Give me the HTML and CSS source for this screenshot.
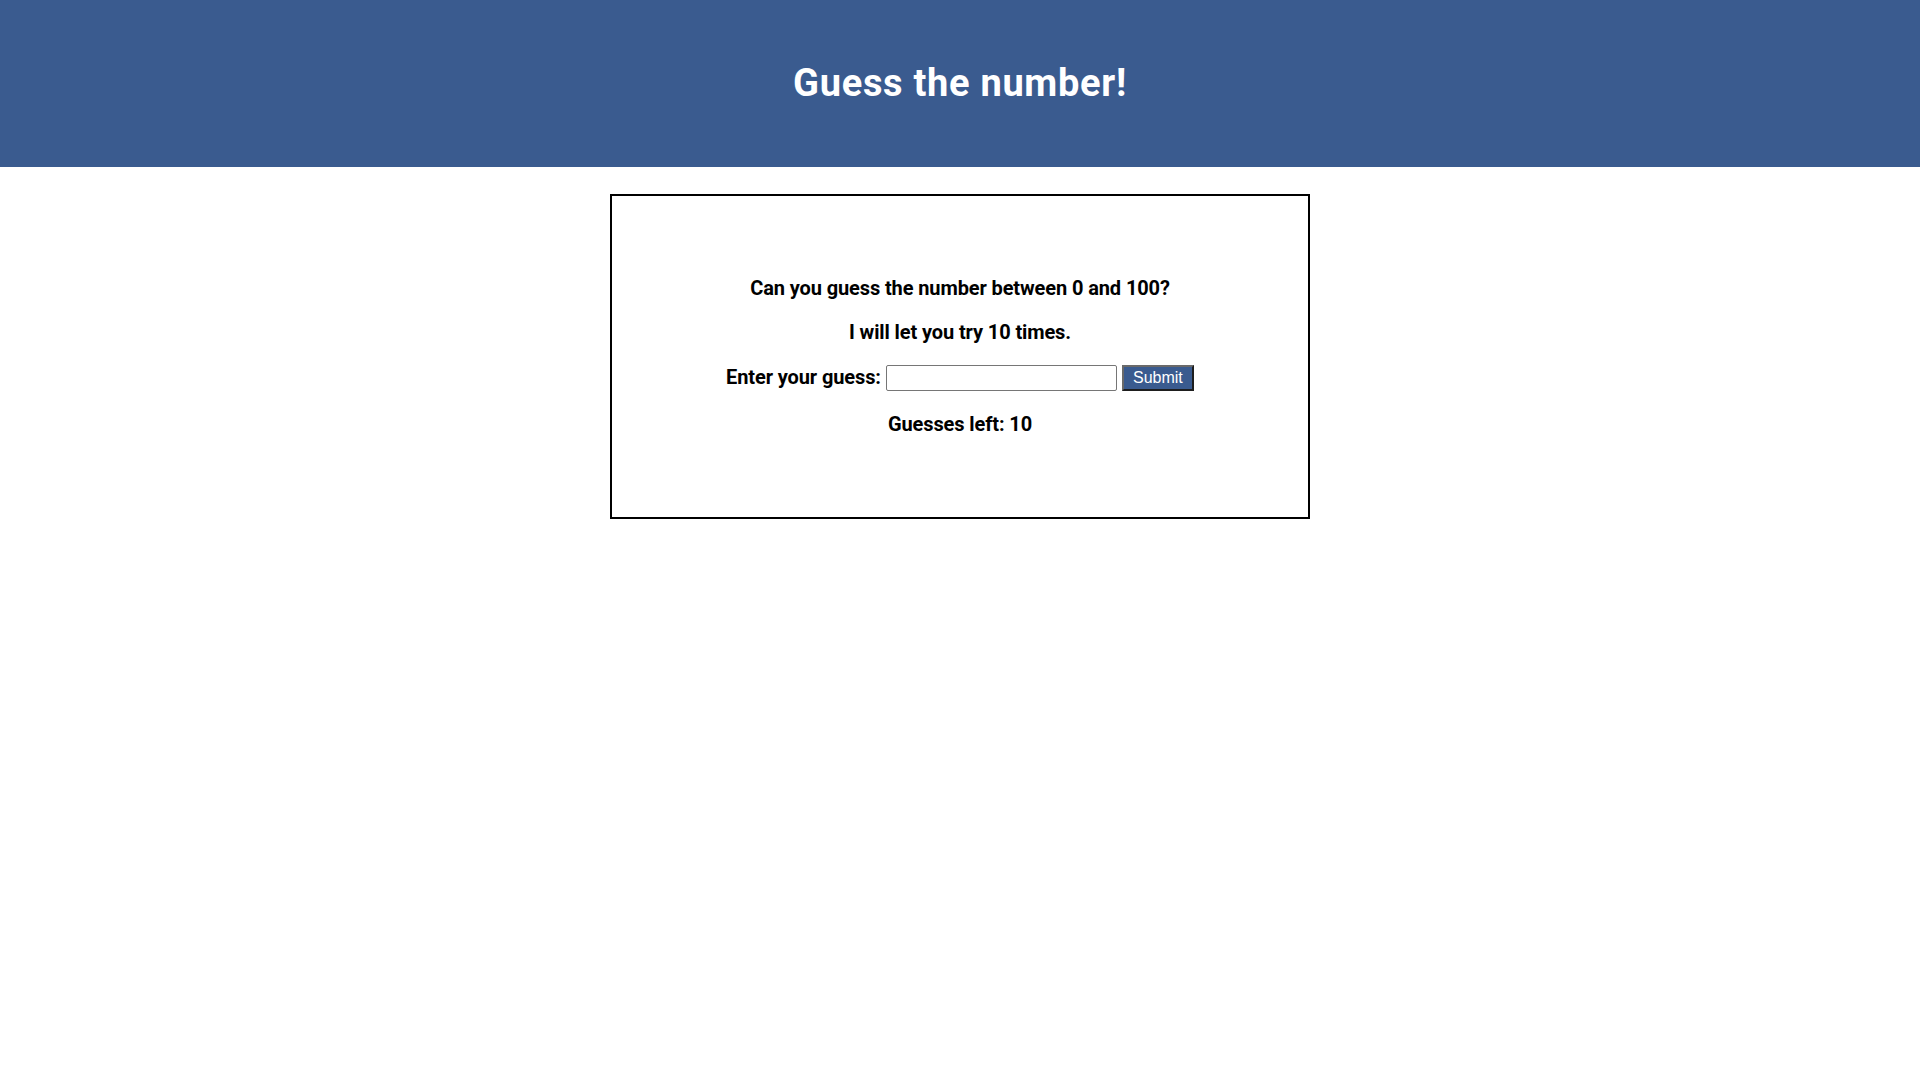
FILE: index.html
```html
<!DOCTYPE html>
<html lang="en">
<head>
<meta charset="utf-8">
<title>Guess the number!</title>
<link rel="stylesheet" href="styles.css">
</head>
<body>
<header class="header">
  <h1 class="title">Guess the number!</h1>
</header>
<main class="main">
  <section class="card">
    <p class="line">Can you guess the number between 0 and 100?</p>
    <p class="line">I will let you try 10 times.</p>
    <div class="row">
      <label class="label" for="guess">Enter your guess:</label>
      <input class="field" id="guess" type="text">
      <button class="btn" type="button">Submit</button>
    </div>
    <p class="line">Guesses left: 10</p>
  </section>
</main>
</body>
</html>
```

FILE: styles.css
```css
html, body {
  margin: 0;
  padding: 0;
  background: #ffffff;
}
body {
  font-family: Roboto, "Liberation Sans", sans-serif;
  color: #000;
}
.header {
  background: #3a5b8f;
  height: 167px;
  display: flex;
  align-items: center;
  justify-content: center;
}
.title {
  margin: 0;
  color: #ffffff;
  font-size: 38px;
  font-weight: 700;
  letter-spacing: 0.7px;
  line-height: 44px;
  position: relative;
  top: -1px;
}
.main {
  display: flex;
  justify-content: center;
  padding-top: 27px;
}
.card {
  box-sizing: border-box;
  width: 700px;
  height: 325px;
  border: 2px solid #000;
  display: flex;
  flex-direction: column;
  align-items: center;
  gap: 20px;
  padding: 80px 0 0;
}
.line {
  margin: 0;
  font-size: 20px;
  font-weight: 700;
  letter-spacing: -0.11px;
  line-height: 24px;
}
.row {
  display: flex;
  align-items: center;
  gap: 5px;
  height: 28px;
  font-size: 20px;
  font-weight: 700;
  letter-spacing: -0.11px;
}
.label {
  margin-bottom: 2px;
}
.field {
  box-sizing: border-box;
  width: 231px;
  height: 26px;
  border: 1px solid #767676;
  border-radius: 2px;
  padding: 1px 2px;
  font-size: 16px;
  margin: 0;
}
.btn {
  box-sizing: border-box;
  width: 72px;
  height: 26px;
  background: #3a5b8f;
  color: #ffffff;
  border-style: solid;
  border-width: 2px;
  border-color: #6a6a6a #1e1e1e #1e1e1e #6a6a6a;
  font-family: "Liberation Sans", Arial, sans-serif;
  font-size: 16px;
  letter-spacing: 0;
  padding: 0;
  margin: 0;
}
```
